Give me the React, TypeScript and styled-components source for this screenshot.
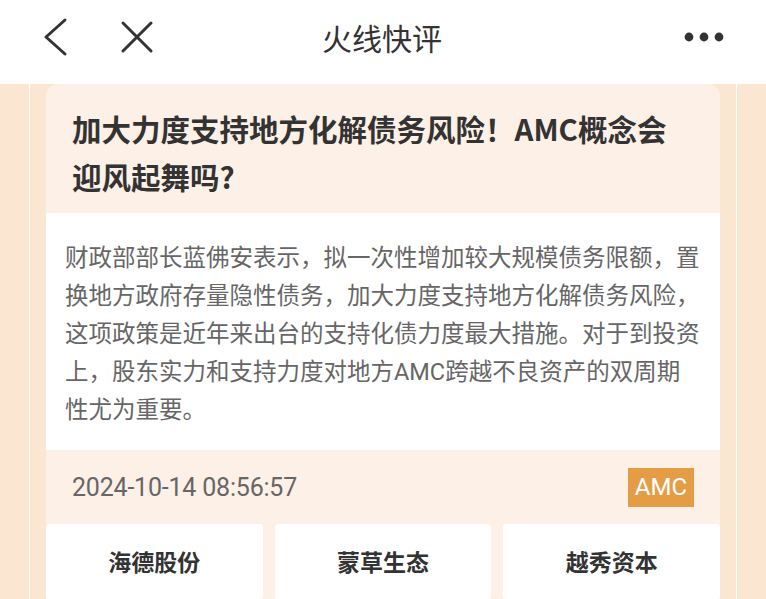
import React from 'react';
import styled, { createGlobalStyle } from 'styled-components';

const GlobalStyle = createGlobalStyle`
  html, body {
    margin: 0;
    padding: 0;
    background: #fbe6d1;
  }
  * {
    box-sizing: border-box;
  }
`;

const FONT = `Roboto, "Noto Sans CJK SC", "Noto Sans", sans-serif`;
const CJK_FONT = `"Noto Sans CJK SC", "Noto Sans", sans-serif`;

// 페이지 전체
const Page = styled.div`
  width: 766px;
  height: 599px;
  overflow: hidden;
  display: flex;
  flex-direction: column;
  background: #fbe6d1;
  font-family: ${FONT};
`;

const TopBar = styled.header`
  height: 84px;
  flex-shrink: 0;
  background: #ffffff;
  display: grid;
  grid-template-columns: 1fr auto 1fr;
  align-items: center;
  padding: 0 42px 10px 40px;
`;

const NavLeft = styled.div`
  display: flex;
  align-items: center;
  gap: 50px;
`;

const NavRight = styled.div`
  display: flex;
  justify-content: flex-end;
`;

const IconButton = styled.button`
  border: none;
  background: none;
  padding: 0;
  display: flex;
  align-items: center;
  justify-content: center;
  cursor: pointer;
`;

const PageTitle = styled.h1`
  margin: 0;
  font-size: 30px;
  font-weight: 400;
  color: #333333;
`;

const Rail = styled.div`
  flex: 1;
  padding: 0 29px;
  display: flex;
`;

const Lane = styled.div`
  flex: 1;
  border-left: 1px solid #ffffff;
  border-right: 1px solid #ffffff;
  padding: 0 16px;
  display: flex;
`;

const Card = styled.article`
  flex: 1;
  background: #fdf0e6;
  border-radius: 12px 12px 0 0;
  display: flex;
  flex-direction: column;
`;

const Headline = styled.h2`
  margin: 0;
  padding: 20px 30px 13px 26px;
  font-family: ${CJK_FONT};
  font-size: 29.5px;
  font-weight: 700;
  line-height: 48px;
  color: #333333;
`;

const Summary = styled.p`
  margin: 0;
  background: #ffffff;
  padding: 26px 20px 21px 19px;
  font-size: 23.5px;
  line-height: 38px;
  color: #666666;
`;

const MetaRow = styled.div`
  height: 74px;
  display: flex;
  align-items: center;
  justify-content: space-between;
  padding: 0 26px;
`;

const Timestamp = styled.span`
  font-size: 25px;
  color: #666666;
  letter-spacing: -0.2px;
`;

const Tag = styled.span`
  background: #e59d45;
  color: #ffffff;
  font-size: 24px;
  line-height: 39px;
  padding: 0 7px;
`;

const StockGrid = styled.div`
  display: grid;
  grid-template-columns: repeat(3, 1fr);
  gap: 12px;
`;

const StockButton = styled.div`
  height: 76px;
  background: #ffffff;
  border-radius: 4px;
  display: flex;
  align-items: center;
  justify-content: center;
  padding-bottom: 2px;
  font-size: 23px;
  font-weight: 700;
  color: #333333;
`;

const BackIcon = () => (
  <svg width="30" height="40" viewBox="0 0 30 40" fill="none">
    <path d="M25 3 L6 20 L25 37" stroke="#333" strokeWidth="3" strokeLinecap="round" strokeLinejoin="round" />
  </svg>
);

const CloseIcon = () => (
  <svg width="34" height="34" viewBox="0 0 34 34" fill="none">
    <path d="M3 3 L31 31 M31 3 L3 31" stroke="#333" strokeWidth="3" strokeLinecap="round" />
  </svg>
);

const MoreIcon = () => (
  <svg width="40" height="10" viewBox="0 0 40 10">
    <circle cx="5" cy="5" r="4.4" fill="#333" />
    <circle cx="20" cy="5" r="4.4" fill="#333" />
    <circle cx="35" cy="5" r="4.4" fill="#333" />
  </svg>
);

const stocks = ['海德股份', '蒙草生态', '越秀资本'];

export default function App() {
  return (
    <>
      <GlobalStyle />
      <Page>
        <TopBar>
          <NavLeft>
            <IconButton><BackIcon /></IconButton>
            <IconButton><CloseIcon /></IconButton>
          </NavLeft>
          <PageTitle>火线快评</PageTitle>
          <NavRight>
            <IconButton><MoreIcon /></IconButton>
          </NavRight>
        </TopBar>
        <Rail>
          <Lane>
            <Card>
              <Headline>加大力度支持地方化解债务风险！AMC概念会迎风起舞吗?</Headline>
              <Summary>
                财政部部长蓝佛安表示，拟一次性增加较大规模债务限额，置换地方政府存量隐性债务，加大力度支持地方化解债务风险，这项政策是近年来出台的支持化债力度最大措施。对于到投资上，股东实力和支持力度对地方AMC跨越不良资产的双周期性尤为重要。
              </Summary>
              <MetaRow>
                <Timestamp>2024-10-14 08:56:57</Timestamp>
                <Tag>AMC</Tag>
              </MetaRow>
              <StockGrid>
                {stocks.map(name => (
                  <StockButton key={name}>{name}</StockButton>
                ))}
              </StockGrid>
            </Card>
          </Lane>
        </Rail>
      </Page>
    </>
  );
}
